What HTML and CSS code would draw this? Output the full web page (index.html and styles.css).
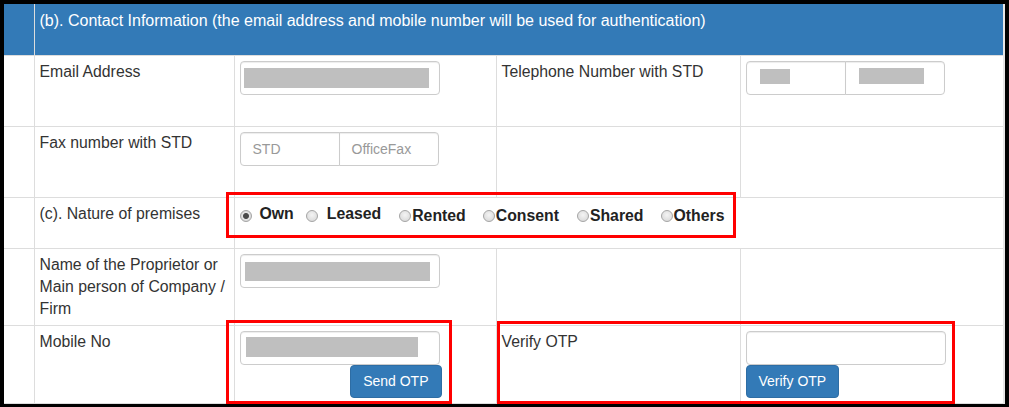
FILE: index.html
```html
<!DOCTYPE html>
<html lang="en">
<head>
    <meta charset="UTF-8">
    <title>Contact Information</title>
    <link rel="stylesheet" href="styles.css">
</head>
<body>
<div class="frame">
    <table class="form-table">
        <colgroup>
            <col class="c-gap">
            <col class="c-label">
            <col class="c-field">
            <col class="c-label2">
            <col class="c-field2">
        </colgroup>
        <tr class="row-head">
            <td class="head"></td>
            <td class="head" colspan="4">(b). Contact Information (the email address and mobile number will be used for authentication)</td>
        </tr>
        <tr class="row-std">
            <td></td>
            <td>Email Address</td>
            <td><div class="field"><span class="redact redact-email"></span></div></td>
            <td>Telephone Number with STD</td>
            <td>
                <div class="field-group">
                    <div class="field part-left"><span class="redact redact-std"></span></div>
                    <div class="field part-right"><span class="redact redact-phone"></span></div>
                </div>
            </td>
        </tr>
        <tr class="row-std">
            <td></td>
            <td>Fax number with STD</td>
            <td>
                <div class="field-group">
                    <div class="field part-left placeholder">STD</div>
                    <div class="field part-right placeholder">OfficeFax</div>
                </div>
            </td>
            <td></td>
            <td></td>
        </tr>
        <tr class="row-short">
            <td></td>
            <td>(c). Nature of premises</td>
            <td colspan="3">
                <div class="premises">
                    <label class="opt opt-up own"><span class="radio checked"></span>Own</label>
                    <label class="opt opt-up leased"><span class="radio"></span>Leased</label>
                    <label class="opt rented"><span class="radio"></span>Rented</label>
                    <label class="opt consent"><span class="radio"></span>Consent</label>
                    <label class="opt shared"><span class="radio"></span>Shared</label>
                    <label class="opt"><span class="radio"></span>Others</label>
                </div>
            </td>
        </tr>
        <tr class="row-name">
            <td></td>
            <td>Name of the Proprietor or Main person of Company / Firm</td>
            <td><div class="field"><span class="redact redact-name"></span></div></td>
            <td></td>
            <td></td>
        </tr>
        <tr class="row-otp">
            <td></td>
            <td>Mobile No</td>
            <td>
                <div class="field"><span class="redact redact-mobile"></span></div>
                <div class="btn-line right"><button class="btn-otp">Send OTP</button></div>
            </td>
            <td>Verify OTP</td>
            <td>
                <div class="field"></div>
                <div class="btn-line"><button class="btn-otp">Verify OTP</button></div>
            </td>
        </tr>
    </table>

    <!-- marcas rojas de la captura -->
    <div class="mark mark-premises"></div>
    <div class="mark mark-send"></div>
    <div class="mark mark-verify"></div>
</div>
</body>
</html>
```

FILE: styles.css
```css
body {
    margin: 0;
    padding: 4px 4px 3px 4px;
    background: #000;
    font-family: "Liberation Sans", Arial, sans-serif;
}

.frame {
    position: relative;
    height: 400px;
    background: #fff;
    border-right: 2px solid #e6e6e6;
    overflow: hidden;
}

/* Tabla del formulario */
.form-table {
    border-collapse: collapse;
    table-layout: fixed;
    width: 999px;
}

.c-gap { width: 30px; }
.c-label { width: 200px; }
.c-field { width: 262px; }
.c-label2 { width: 244px; }
.c-field2 { width: 263px; }

.form-table td {
    border: 1px solid #ddd;
    padding: 5px 5px;
    vertical-align: top;
    font-size: 15.8px;
    line-height: 22px;
    color: #333;
}

.form-table tr td:first-child {
    border-left: 0;
}

.form-table tr td:last-child {
    border-right: 0;
}

.form-table tr.row-head td {
    border-top: 0;
}

.row-head { height: 51px; }
.row-std { height: 71px; }
.row-short { height: 51px; }
.row-name { height: 77px; }
.row-otp { height: 78px; }

.form-table td.head {
    background: #337ab7;
    color: #fff;
    font-size: 16px;
    padding-top: 6px;
}

/* Campos de texto */
.field {
    box-sizing: border-box;
    width: 200px;
    height: 34px;
    border: 1px solid #ccc;
    border-radius: 4px;
    background: #fff;
    box-shadow: inset 0 1px 1px rgba(0, 0, 0, 0.075);
    position: relative;
}

.field-group {
    display: flex;
    width: 200px;
}

.field-group .field {
    width: 100px;
}

.part-left {
    border-radius: 4px 0 0 4px;
}

.part-right {
    border-radius: 0 4px 4px 0;
    margin-left: -1px;
}

.placeholder {
    font-size: 14px;
    line-height: 32px;
    color: #999;
    padding-left: 12px;
}

.redact {
    position: absolute;
    background: #bfbfbf;
}

.redact-email { left: 3px; top: 6px; width: 185px; height: 20px; }
.redact-name { left: 4px; top: 7px; width: 185px; height: 19px; }
.redact-mobile { left: 5px; top: 5px; width: 172px; height: 20px; }
.redact-std { left: 13px; top: 7px; width: 30px; height: 15px; }
.redact-phone { left: 13px; top: 6px; width: 65px; height: 16px; }

/* Opciones de local */
.premises {
    display: flex;
    align-items: center;
    height: 26px;
    font-weight: bold;
    color: #222;
}

.opt {
    display: flex;
    align-items: center;
    white-space: nowrap;
}

.opt-up {
    position: relative;
    top: -2px;
}

.radio {
    box-sizing: border-box;
    display: inline-block;
    width: 12px;
    height: 12px;
    border: 1px solid #a6a6a6;
    border-radius: 50%;
    background: radial-gradient(circle at 50% 40%, #f4f4f4, #d4d4d4);
    margin-right: 1px;
    position: relative;
    top: 0;
}

.opt-up .radio {
    top: 2px;
}

.radio.checked {
    background: radial-gradient(circle, #4a4a4a 0, #4a4a4a 2.5px, #e6e6e6 3.5px, #d0d0d0 6px);
}

.own .radio { margin-right: 8px; }
.own { margin-right: 12px; }
.leased .radio { margin-right: 9px; }
.leased { margin-right: 18px; }
.rented { margin-right: 17px; }
.consent { margin-right: 18px; }
.shared { margin-right: 17px; }

/* Botones OTP */
.btn-line {
    width: 202px;
}

.btn-line.right {
    text-align: right;
}

.btn-otp {
    height: 33px;
    padding: 0 12px;
    border: 1px solid #2e6da4;
    border-radius: 4px;
    background: #337ab7;
    color: #fff;
    font-family: "Liberation Sans", Arial, sans-serif;
    font-size: 14px;
}

/* Recuadros rojos */
.mark {
    position: absolute;
    box-sizing: border-box;
    border: 3px solid #f00;
}

.mark-premises { left: 222px; top: 188px; width: 510px; height: 46px; }
.mark-send { left: 222px; top: 316px; width: 226px; height: 84px; }
.mark-verify { left: 493px; top: 317px; width: 458px; height: 83px; }
```
